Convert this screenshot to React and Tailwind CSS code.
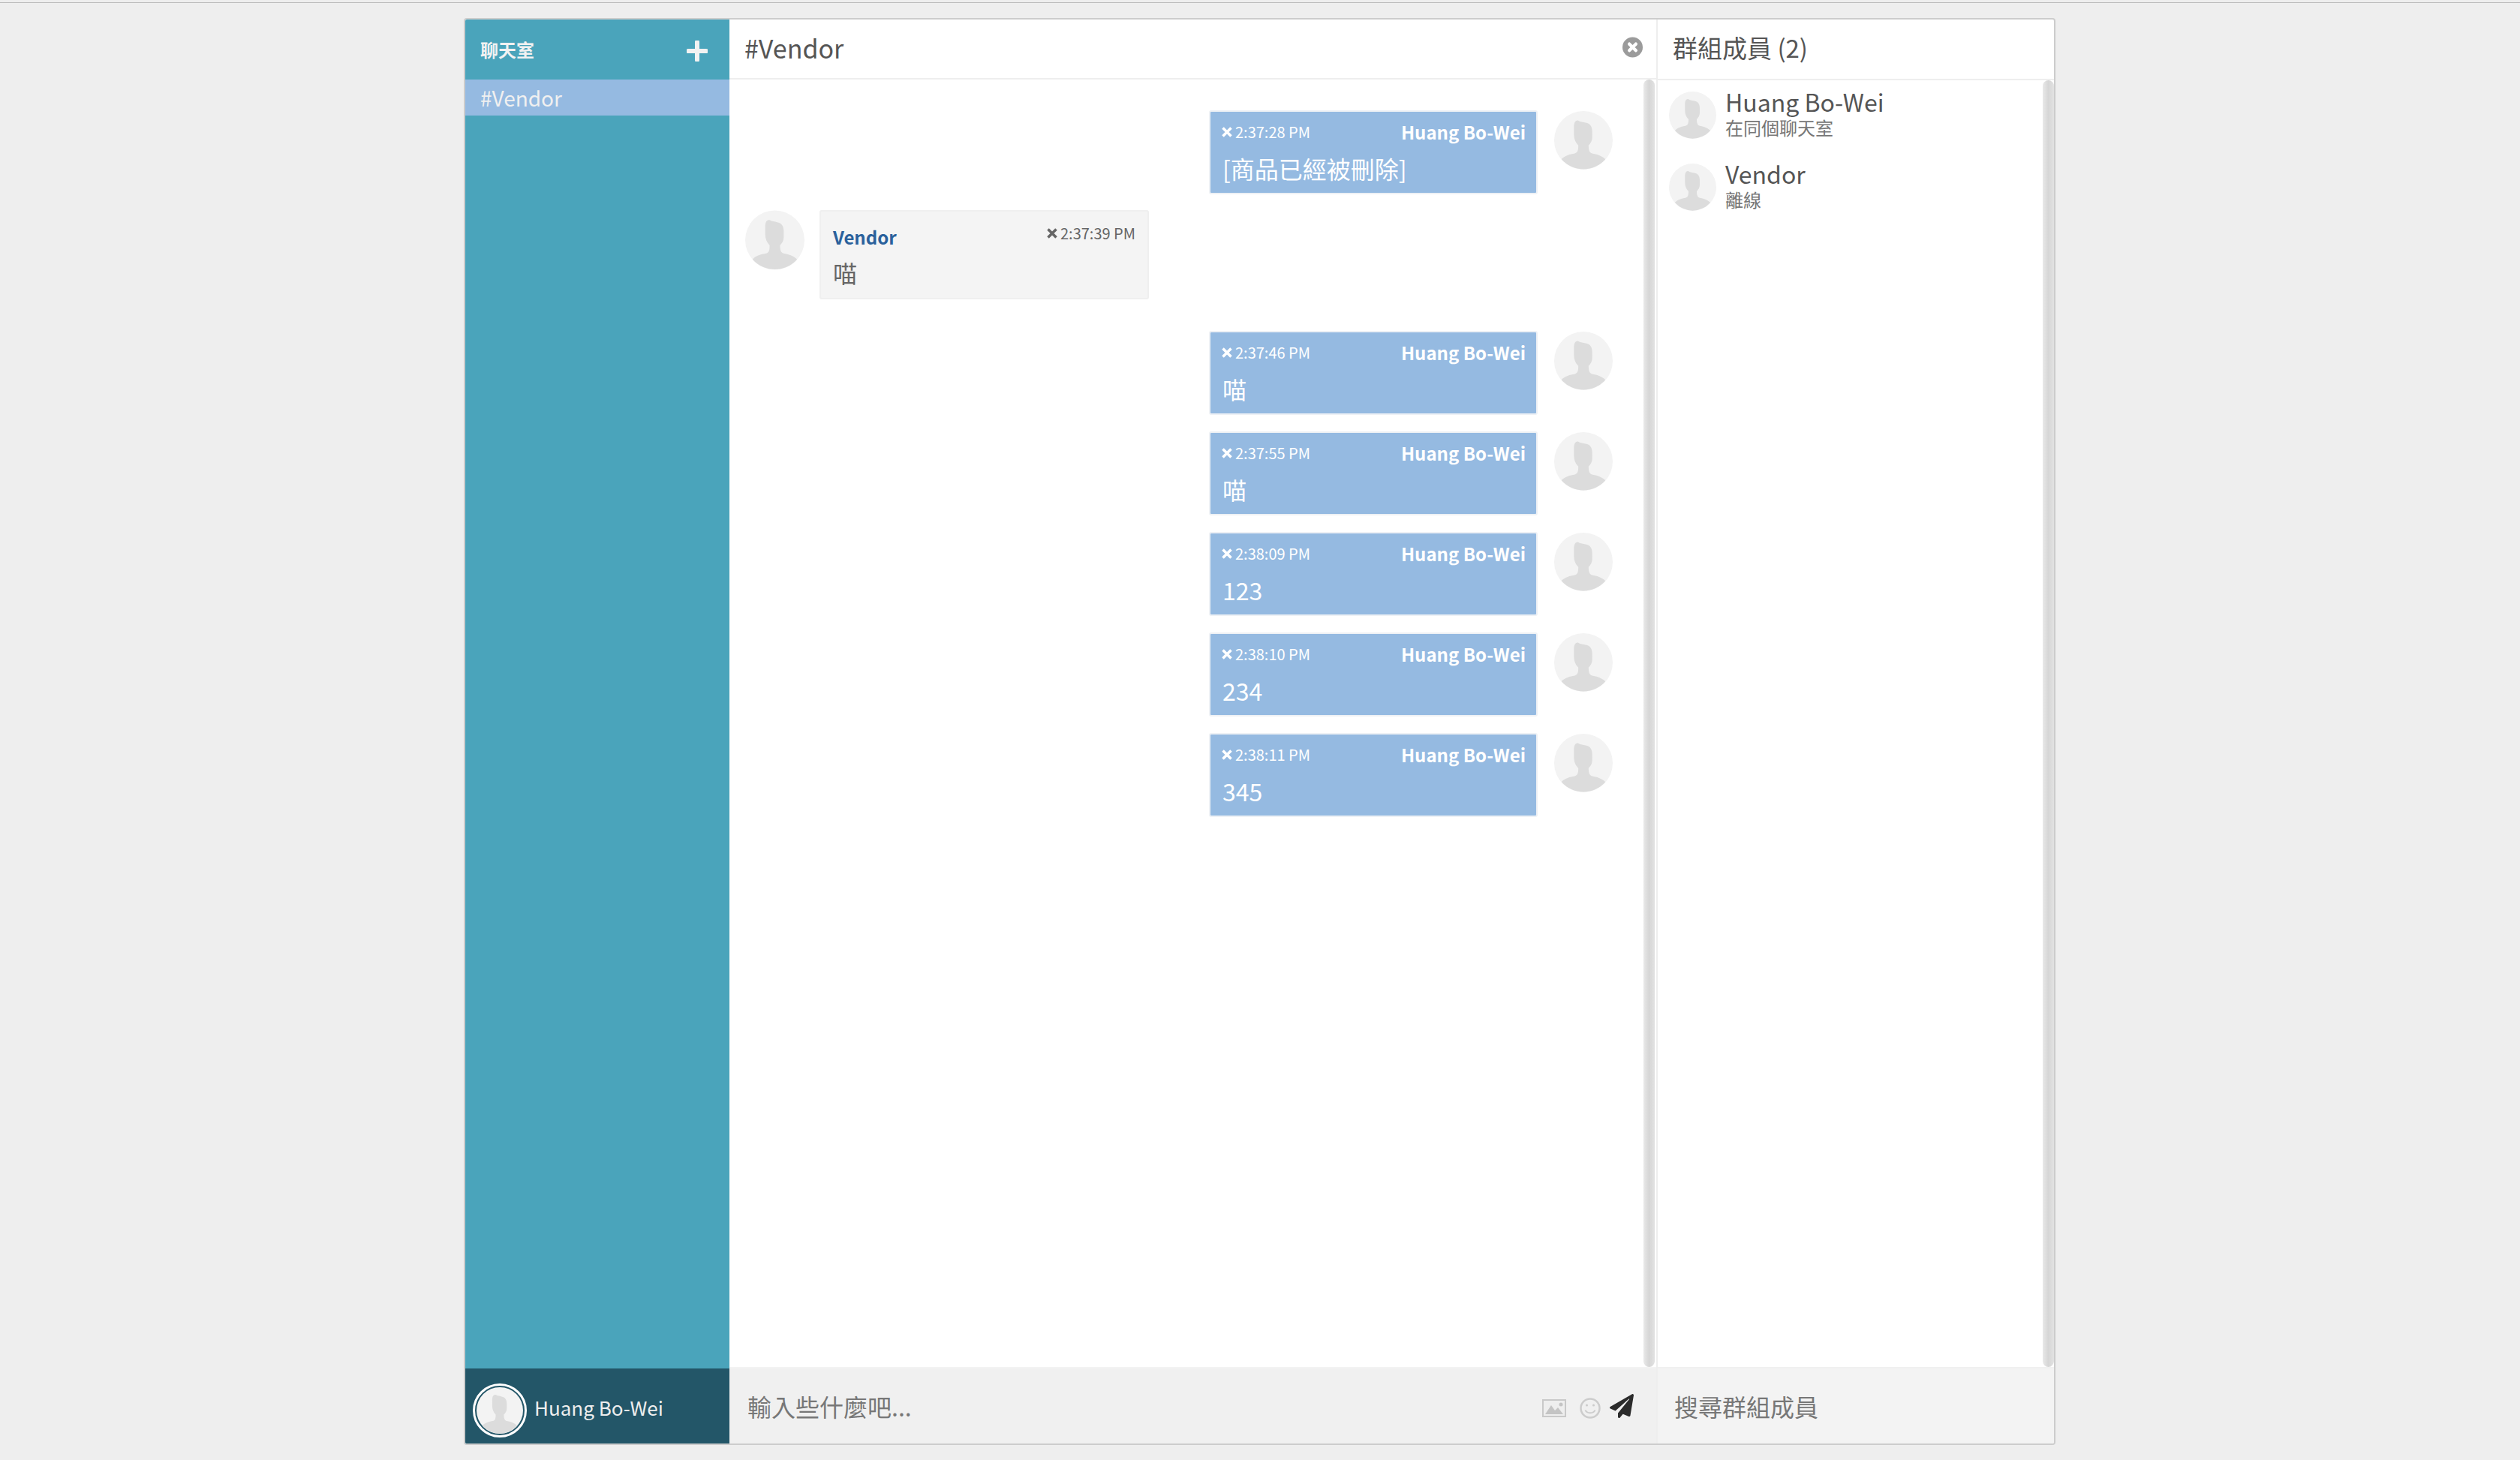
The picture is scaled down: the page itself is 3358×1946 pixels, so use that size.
import { FaPaperPlane } from 'react-icons/fa';

const MESSAGES = [
  { time: '2:37:28 PM', text: '[商品已經被刪除]', gap: 'mb-[21px]' },
  { time: '2:37:39 PM', text: '喵', vendor: true, gap: 'mb-[42px]' },
  { time: '2:37:46 PM', text: '喵', gap: 'mb-[22px]' },
  { time: '2:37:55 PM', text: '喵', gap: 'mb-[22px]' },
  { time: '2:38:09 PM', text: '123', gap: 'mb-[22px]' },
  { time: '2:38:10 PM', text: '234', gap: 'mb-[22px]' },
  { time: '2:38:11 PM', text: '345', gap: 'mb-[22px]' },
];

const MEMBERS = [
  { name: 'Huang Bo-Wei', status: '在同個聊天室' },
  { name: 'Vendor', status: '離線' },
];

function Avatar({ className }) {
  return (
    <svg viewBox="0 0 80 80" className={className}>
      <circle cx="40" cy="40" r="40" fill="#f3f3f3" />
      <path
        d="M10 66C14 61 22 59 28 58C32 57 33 54 33 47C29 43 27 38 27 32L27 22C27 16 29 12 33 13C36 15 40 15 43 16C49 17 52 21 52 28L52 36C52 41 50 44 47 47C47 53 48 57 52 58C58 59 65 61 70 66A40 40 0 0 1 10 66Z"
        fill="#dcdcdc"
      />
    </svg>
  );
}

function SmallX() {
  return (
    <svg viewBox="0 0 16 16" className="w-[16px] h-[16px] mr-[3px] shrink-0">
      <path d="M2.5 2.5L13.5 13.5M13.5 2.5L2.5 13.5" stroke="currentColor" strokeWidth="3.6" />
    </svg>
  );
}

function Message({ m }) {
  if (m.vendor) {
    return (
      <div className={`flex gap-[20px] ${m.gap}`}>
        <Avatar className="w-[79px] h-[80px] shrink-0" />
        <div className="w-[439px] h-[119px] bg-[#f4f4f4] border-2 border-[#efefef] rounded-[3px] px-[16px]">
          <div className="flex justify-between h-[52px] items-end">
            <span className="text-[24px] font-bold leading-[36px] text-[#2a619c]">Vendor</span>
            <span className="flex items-center text-[20px] leading-[30px] text-[#666] self-start mt-[14px]">
              <SmallX />
              {m.time}
            </span>
          </div>
          <div className="text-[32px] leading-[46px] mt-[6px] text-[#666]">{m.text}</div>
        </div>
      </div>
    );
  }
  return (
    <div className={`flex justify-end gap-[22px] ${m.gap}`}>
      <div className="w-[438px] h-[112px] bg-[#95bae1] border-2 border-[#eef1f5] rounded-[3px] px-[14px] text-white">
        <div className="flex justify-between items-center h-[54px]">
          <span className="flex items-center text-[20px] leading-[30px]">
            <SmallX />
            {m.time}
          </span>
          <span className="text-[24px] font-bold leading-[36px]">Huang Bo-Wei</span>
        </div>
        <div className="text-[32px] leading-[44px] -mt-[1px] ml-[2px]">{m.text}</div>
      </div>
      <Avatar className="w-[78px] h-[80px] shrink-0" />
    </div>
  );
}

function Scrollbar() {
  return <div className="w-[15px] shrink-0 rounded-full bg-gradient-to-r from-[#e9e9e9] via-[#d6d6d6] to-[#e2e2e2]" />;
}

export default function App() {
  return (
    <div className="h-[1946px] bg-[#eeeeee] font-['Noto_Sans_CJK_TC','Noto_Sans',sans-serif] overflow-hidden">
      <div className="h-[4px] border-b-[1px] border-[#bbbbbb]" />
      <div className="h-[20px]" />
      <div className="w-[2121px] h-[1902px] ml-[618px] flex border-2 border-[#cccccc] rounded-[4px] overflow-hidden bg-white">
        {/* left rail */}
        <aside className="w-[352px] shrink-0 flex flex-col bg-[#4aa4bb]">
          <div className="h-[80px] shrink-0 flex items-center justify-between pl-[20px] pr-[29px]">
            <span className="text-[24px] font-bold text-[#f2f2f2]">聊天室</span>
            <svg viewBox="0 0 28 28" className="w-[28px] h-[28px] mt-[3px]">
              <path d="M14 2V26M2 14H26" stroke="#f2f2f2" strokeWidth="6" strokeLinecap="round" />
            </svg>
          </div>
          <div className="h-[48px] shrink-0 flex items-center pl-[20px] bg-[#95bae1] text-[28px] text-[#f0f0f0]">#Vendor</div>
          <div className="flex-1" />
          <div className="h-[100px] shrink-0 flex items-center bg-[#235668] pl-[10px]">
            <div className="w-[72px] h-[72px] mt-[12px] rounded-full border-[3px] border-white p-[2px] shrink-0">
              <Avatar className="w-full h-full" />
            </div>
            <span className="ml-[10px] mt-[2px] text-[26px] text-[#eeeeee]">Huang Bo-Wei</span>
          </div>
        </aside>

        {/* chat */}
        <main className="w-[1235px] shrink-0 flex flex-col">
          <div className="h-[80px] shrink-0 flex items-center justify-between pl-[20px] pr-[18px] border-b-2 border-[#eeeeee]">
            <span className="text-[34px] -mt-[3px] text-[#555555]">#Vendor</span>
            <svg viewBox="0 0 28 28" className="w-[27px] h-[28px] -mt-[4px]">
              <circle cx="14" cy="14" r="14" fill="#9b9b9b" />
              <path d="M9.5 9.5L18.5 18.5M18.5 9.5L9.5 18.5" stroke="#fff" strokeWidth="4.5" strokeLinecap="round" />
            </svg>
          </div>
          <div className="flex-1 flex min-h-0 pr-[2px]">
            <div className="flex-1 pt-[41px] pl-[21px] pr-[41px]">
              {MESSAGES.map((m) => (
                <Message key={m.time} m={m} />
              ))}
            </div>
            <Scrollbar />
          </div>
          <div className="h-[102px] shrink-0 flex items-center justify-between bg-[#f0f0f0] border-t-2 border-[#f3f3f3] pl-[24px] pr-[30px]">
            <span className="text-[32px] text-[#777777]">輸入些什麼吧...</span>
            <div className="flex items-center mt-[2px]">
              <svg viewBox="0 0 32 24" className="w-[32px] h-[24px] mt-[4px]">
                <rect x="1" y="1" width="30" height="22" fill="#eeeeee" stroke="#c9c9c9" strokeWidth="2" />
                <path d="M4 20L12 8L17 15L21 11L28 20Z" fill="#c4c4c4" />
                <circle cx="25" cy="7" r="2.5" fill="#c4c4c4" />
              </svg>
              <svg viewBox="0 0 28 28" className="w-[28px] h-[28px] ml-[18px] mt-[4px]">
                <circle cx="14" cy="14" r="12.5" fill="none" stroke="#cccccc" strokeWidth="2.5" />
                <circle cx="9.5" cy="10" r="1.6" fill="#cccccc" />
                <circle cx="18.5" cy="10" r="1.6" fill="#cccccc" />
                <path d="M7.5 16.5C9.5 21.5 18.5 21.5 20.5 16.5" fill="none" stroke="#cccccc" strokeWidth="2" />
              </svg>
              <FaPaperPlane className="w-[32px] h-[32px] ml-[12px] -mt-[3px] text-[#2b2b2b]" />
            </div>
          </div>
        </main>

        {/* members */}
        <section className="flex-1 flex flex-col border-l-2 border-[#eeeeee]">
          <div className="h-[81px] shrink-0 flex items-center pl-[20px] border-b-2 border-[#eeeeee]">
            <span className="text-[33px] -mt-[3px] text-[#555555]">群組成員 (2)</span>
          </div>
          <div className="flex-1 flex min-h-0">
            <div className="flex-1 pt-[15px] pl-[15px]">
              {MEMBERS.map((u) => (
                <div key={u.name} className="flex gap-[12px] mb-[33px] h-[63px]">
                  <Avatar className="w-[63px] h-[63px] shrink-0" />
                  <div className="-mt-[5px]">
                    <div className="text-[32px] leading-[36px] text-[#555555]">{u.name}</div>
                    <div className="text-[24px] leading-[26px] mt-[4px] text-[#777777]">{u.status}</div>
                  </div>
                </div>
              ))}
            </div>
            <Scrollbar />
          </div>
          <div className="h-[102px] shrink-0 flex items-center bg-[#f3f3f3] border-t-2 border-[#f0f0f0] pl-[22px]">
            <span className="text-[32px] text-[#777777]">搜尋群組成員</span>
          </div>
        </section>
      </div>
    </div>
  );
}
